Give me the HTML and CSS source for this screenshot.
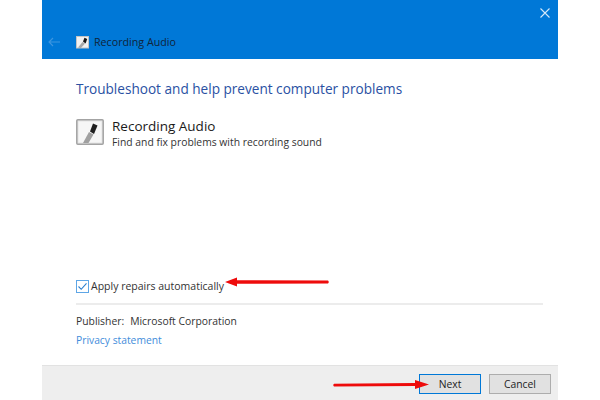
FILE: index.html
```html
<!DOCTYPE html>
<html lang="en">
<head>
    <meta charset="UTF-8">
    <title>Recording Audio</title>
    <link rel="stylesheet" href="styles.css">
</head>
<body>
    <div class="window">
        <header class="titlebar">
            <div class="close-row">
                <svg class="close-icon" width="10" height="10" viewBox="0 0 10 10"><path d="M0.5 0.5L9.5 9.5M9.5 0.5L0.5 9.5" stroke="#d5e8f8" stroke-width="1.1" fill="none"/></svg>
            </div>
            <div class="title-row">
                <svg class="back-icon" width="12" height="10" viewBox="0 0 12 10"><path d="M12 5H1M5 1L1 5L5 9" stroke="#3d96e0" stroke-width="1.1" fill="none"/></svg>
                <svg class="small-icon" width="13" height="13" viewBox="0 0 13 13">
                    <rect x="0.5" y="0.5" width="12" height="11.5" fill="#f1f1f1" stroke="#c4c4c4"/>
                    <path d="M2 11.5L6.5 6L9 7.5L5 12Z" fill="#a8a8a8"/>
                    <path d="M7 5.5L8.5 1.8L11.2 3L9.6 7.5Z" fill="#161616"/>
                </svg>
                <span class="title-text">Recording Audio</span>
            </div>
        </header>

        <main class="content">
            <h1 class="heading">Troubleshoot and help prevent computer problems</h1>
            <div class="tool">
                <svg class="tool-icon" width="28" height="26" viewBox="0 0 28 26">
                    <rect x="0.8" y="0.8" width="26.4" height="24.4" rx="1" fill="#e4e4e4" stroke="#a3a3a3" stroke-width="1.5"/>
                    <rect x="2.5" y="2.5" width="23" height="21" fill="#f6f6f6"/>
                    <path d="M7 24L13 13L17.5 15.5L12.5 24Z" fill="#a0a0a0"/>
                    <path d="M14 12.5L17 4.5L21.5 6.5L18 15Z" fill="#1e1e1e"/>
                </svg>
                <div>
                    <div class="tool-name">Recording Audio</div>
                    <div class="tool-desc">Find and fix problems with recording sound</div>
                </div>
            </div>

            <label class="repair">
                <span class="checkbox">
                    <svg width="11" height="11" viewBox="0 0 11 11"><path d="M1.5 5.5L4.2 8.3L9.5 2.3" stroke="#2a7fcf" stroke-width="1.1" fill="none"/></svg>
                </span>
                Apply repairs automatically
            </label>
            <div class="divider"></div>
            <div class="publisher"><span class="publisher-label">Publisher:</span>Microsoft Corporation</div>
            <a class="privacy" href="#">Privacy statement</a>
        </main>

        <footer class="footer">
            <button class="btn btn-primary">Next</button>
            <button class="btn">Cancel</button>
        </footer>

        <!-- red arrows drawn on top of the screenshot -->
        <svg class="arrow arrow-repair" width="104" height="10" viewBox="0 0 104 10"><path d="M0 5L12 0.5L12 3.2L103 3.4Q104.5 5 103 6.4L12 6.8L12 9.5Z" fill="#ee0b0b"/></svg>
        <svg class="arrow arrow-next" width="97" height="10" viewBox="0 0 97 10"><path d="M96 4.5L82 0L82 3L1 3.8Q-0.5 5 1 6.6L82 6L82 9Z" fill="#ee0b0b"/></svg>
    </div>
</body>
</html>
```

FILE: styles.css
```css
body {
    margin: 0;
    background-color: #fff;
    font-family: "Open Sans", "Noto Sans", sans-serif;
    font-size: 10.35px;
    color: #222;
}
.window {
    position: relative;
    width: 516px;
    height: 400px;
    margin: 0 auto;
    display: flex;
    flex-direction: column;
    overflow: hidden;
}
.titlebar {
    height: 59px;
    flex: none;
    box-sizing: border-box;
    padding: 8px 8px 0 6px;
    background-color: #0078d7;
}
.close-row {
    display: flex;
    justify-content: flex-end;
}
.title-row {
    display: flex;
    align-items: center;
    margin-top: 17px;
}
.back-icon {
    margin-right: 16px;
}
.small-icon {
    margin-right: 5px;
}
.title-text {
    font-size: 10.7px;
    color: #10243a;
}
.content {
    flex: 1;
    display: flex;
    flex-direction: column;
    padding: 20px 15px 0 34px;
}
.heading {
    margin: 0;
    font-size: 13.6px;
    font-weight: 400;
    line-height: 19px;
    color: #2a51a3;
}
.tool {
    display: flex;
    align-items: flex-start;
    margin-top: 19px;
}
.tool-icon {
    margin: 2px 8px 0 0;
}
.tool-name {
    font-size: 13.5px;
    line-height: 18px;
    color: #1a1a1a;
}
.tool-desc {
    line-height: 15px;
    color: #333;
}
.repair {
    display: flex;
    align-items: center;
    margin-top: auto;
    font-size: 10.5px;
    color: #333;
}
.checkbox {
    width: 11px;
    height: 11px;
    margin-right: 2px;
    border: 1px solid #5ea6e6;
    display: flex;
}
.divider {
    height: 2px;
    margin-top: 10px;
    background-color: #ececec;
}
.publisher {
    margin-top: 9px;
    line-height: 15px;
    color: #333;
}
.publisher-label {
    margin-right: 6px;
}
.privacy {
    margin: 4px 0 17px;
    font-size: 10.3px;
    line-height: 15px;
    color: #3f8ddb;
    text-decoration: none;
}
.footer {
    height: 35px;
    flex: none;
    box-sizing: border-box;
    display: flex;
    justify-content: flex-end;
    align-items: flex-start;
    gap: 8px;
    padding: 8px 7px 0 0;
    background-color: #eeeeee;
    border-top: 1px solid #e2e2e2;
}
.btn {
    width: 62px;
    height: 20px;
    padding: 0;
    font-family: inherit;
    font-size: 10.35px;
    color: #222;
    background-color: #e1e1e1;
    border: 1px solid #adadad;
}
.btn-primary {
    border: 1px solid #0078d7;
}
.arrow {
    position: absolute;
}
.arrow-repair {
    left: 183px;
    top: 277px;
}
.arrow-next {
    left: 291px;
    top: 380px;
}
```
